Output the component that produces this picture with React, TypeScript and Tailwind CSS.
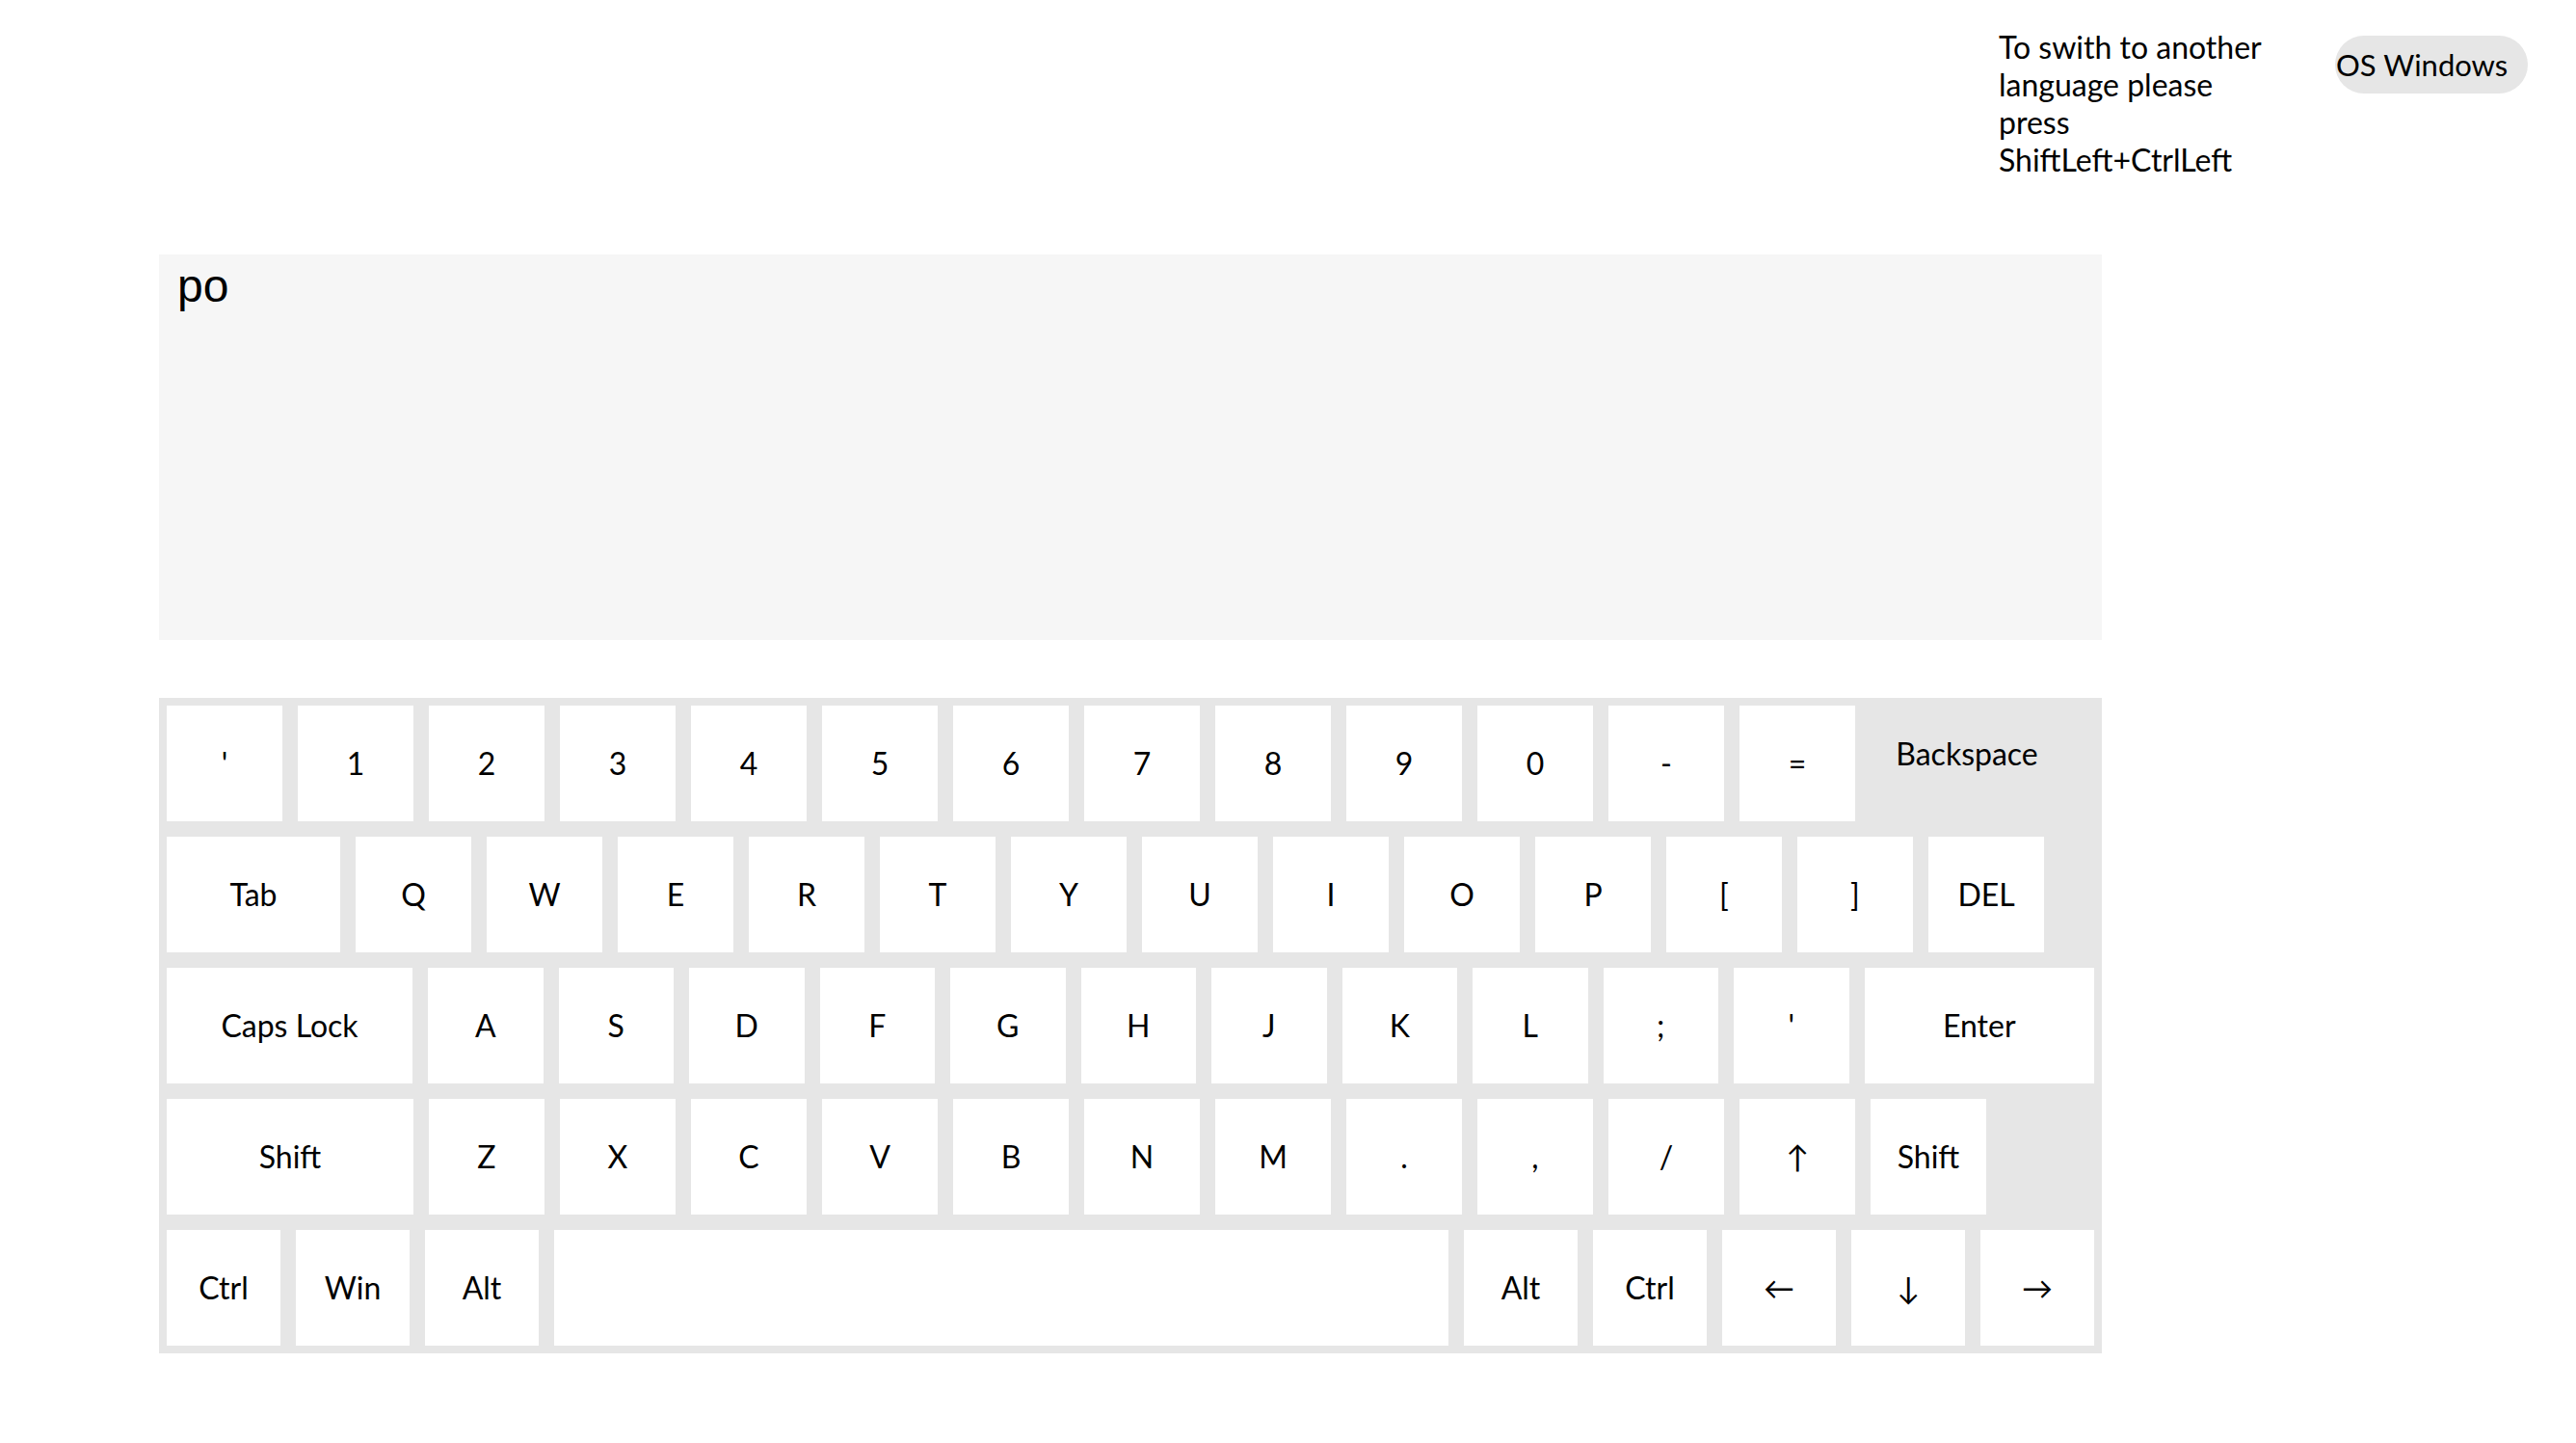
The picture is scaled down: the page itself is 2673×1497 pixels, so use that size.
import React from 'react';

type K = { label: string; w?: string };

const row1: K[] = ["'", '1', '2', '3', '4', '5', '6', '7', '8', '9', '0', '-', '='].map((l) => ({ label: l }));
const row2: K[] = [{ label: 'Tab', w: 'w-[180px]' }, ...['Q', 'W', 'E', 'R', 'T', 'Y', 'U', 'I', 'O', 'P', '[', ']', 'DEL'].map((l) => ({ label: l }))];
const row3: K[] = [
    { label: 'Caps Lock', w: 'w-[255px]' },
    ...['A', 'S', 'D', 'F', 'G', 'H', 'J', 'K', 'L', ';', "'"].map((l) => ({ label: l, w: 'w-[119.5px]' })),
    { label: 'Enter', w: 'flex-1' },
];
const row4: K[] = [{ label: 'Shift', w: 'w-[256px]' }, ...['Z', 'X', 'C', 'V', 'B', 'N', 'M', '.', ',', '/', '↑', 'Shift'].map((l) => ({ label: l }))];
const row5: K[] = [
    { label: 'Ctrl', w: 'w-[118px]' },
    { label: 'Win', w: 'w-[118px]' },
    { label: 'Alt', w: 'w-[118px]' },
    { label: '', w: 'flex-1' },
    { label: 'Alt', w: 'w-[118px]' },
    { label: 'Ctrl', w: 'w-[118px]' },
    { label: '←', w: 'w-[118px]' },
    { label: '↓', w: 'w-[118px]' },
    { label: '→', w: 'w-[118px]' },
];

function Key({ label, w }: K) {
    return (
        <div className={`m-2 h-[120px] shrink-0 bg-white flex items-center justify-center ${w ?? 'w-[120px]'}`}>
            {label}
        </div>
    );
}

function Row({ keys, children }: { keys: K[]; children?: React.ReactNode }) {
    return (
        <div className="flex">
            {keys.map((k, i) => (
                <Key key={i} {...k} />
            ))}
            {children}
        </div>
    );
}

export default function App() {
    return (
        <div className="min-h-screen bg-white text-black font-['Lato','Liberation_Sans',sans-serif]">
            <header className="flex justify-end items-start pt-[29px] pr-[50px] gap-[59px]">
                <p className="w-[290px] text-[32px] leading-[39px]">
                    To swith to another language please press ShiftLeft+CtrlLeft
                </p>
                <div className="mt-2 h-[60px] w-[200px] rounded-full bg-[#e6e6e6] flex items-center pl-px text-[31px]">
                    OS Windows
                </div>
            </header>

            <main className="ml-[165px] w-[2016px] mt-[79px]">
                <div className="h-[400px] bg-[#f6f6f6] pl-[19px] pt-[9px] text-[48px] leading-none font-['Liberation_Sans',sans-serif]">
                    po
                </div>

                <div className="mt-[60px] bg-[#e6e6e6] flex flex-col text-[32px]">
                    <Row keys={row1}>
                        <div className="m-2 h-[120px] w-[200px] flex items-center justify-center pb-5">Backspace</div>
                    </Row>
                    <Row keys={row2} />
                    <Row keys={row3} />
                    <Row keys={row4} />
                    <Row keys={row5} />
                </div>
            </main>
        </div>
    );
}
